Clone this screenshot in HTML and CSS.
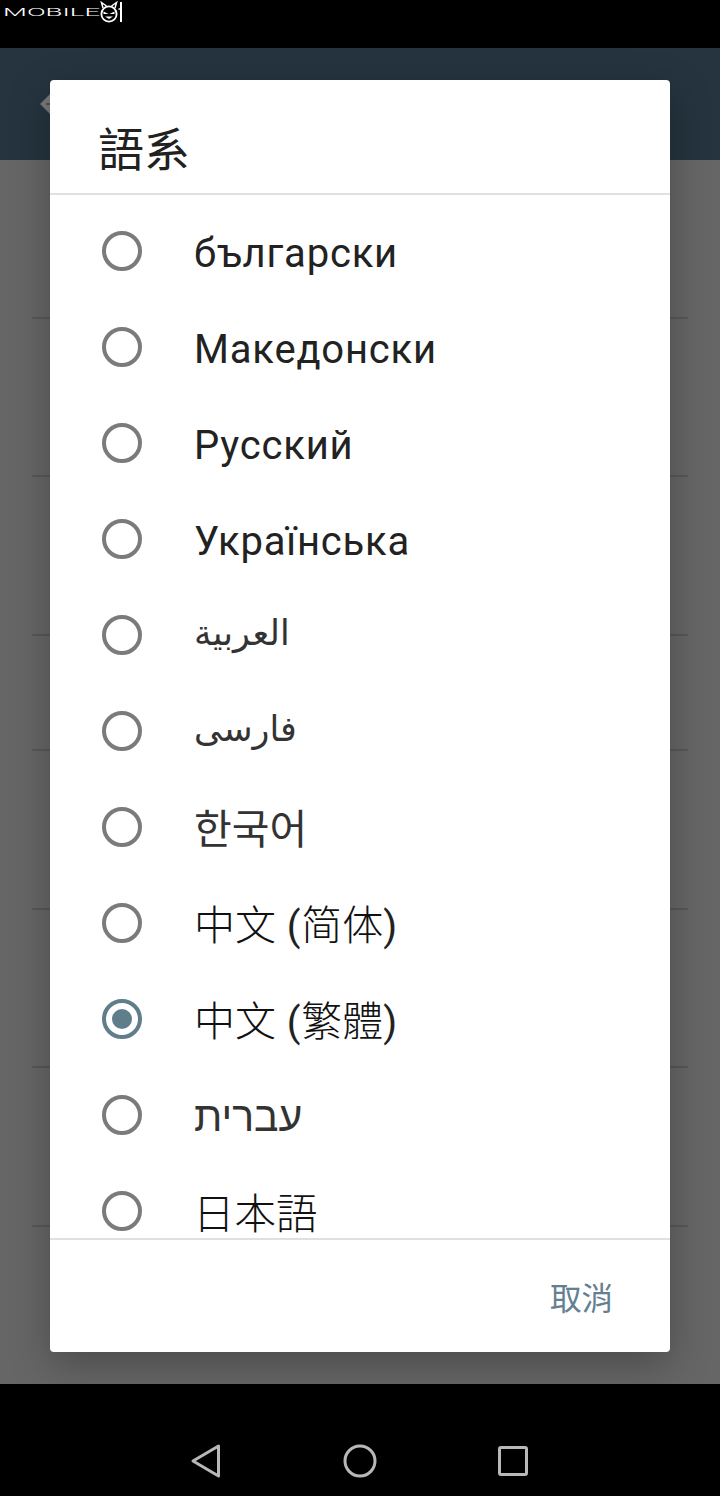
FILE: index.html
```html
<!DOCTYPE html>
<html lang="zh-Hant">
<head>
<meta charset="utf-8">
<title>語系</title>
<link rel="stylesheet" href="styles.css">
</head>
<body>
<div class="screen">
  <div class="status">
    <div class="logo">
      <span class="logo-box"><span class="logo-text">MOBILE</span></span>
      <svg class="logo-icon" viewBox="0 0 30 24" width="30" height="24">
        <circle cx="10" cy="14" r="7.6" fill="none" stroke="#fff" stroke-width="1.8"/>
        <path d="M4 8 L2.5 2.5 L7.5 6 M16 8 L17.5 2.5 L12.5 6" fill="none" stroke="#fff" stroke-width="1.5"/>
        <path d="M4.5 11.5 L9.5 14 L4.5 14 Z M15.5 11.5 L10.5 14 L15.5 14 Z M6 16.5 L10 19 L14 16.5 Z" fill="#fff"/>
        <path d="M22 2 V22" stroke="#fff" stroke-width="2"/>
        <path d="M19.5 9 H21.5" stroke="#fff" stroke-width="1.5"/>
      </svg>
    </div>
  </div>
  <header class="appbar">
    <svg class="back" viewBox="0 0 20 24" width="20" height="24"><path d="M0 12 L10 2 L20 2 V22 L10 22 Z" fill="#77797b"/><path d="M6 12 H20" stroke="#4d5357" stroke-width="2"/></svg>
  </header>
  <main class="behind">
    <div class="row h159"></div>
    <div class="row h158"></div>
    <div class="row h159"></div>
    <div class="row h115"></div>
    <div class="row h159"></div>
    <div class="row h158"></div>
    <div class="row h159"></div>
  </main>
  <nav class="navbar">
    <svg viewBox="0 0 32 36" width="32" height="36"><path d="M28.5 3 V33 L3 18 Z" fill="none" stroke="#b8b8b8" stroke-width="3" stroke-linejoin="round"/></svg>
    <svg viewBox="0 0 36 36" width="36" height="36"><circle cx="18" cy="18" r="15" fill="none" stroke="#b8b8b8" stroke-width="3"/></svg>
    <svg viewBox="0 0 32 32" width="32" height="32"><rect x="1.5" y="2.5" width="27" height="27" rx="1.5" fill="none" stroke="#b8b8b8" stroke-width="3"/></svg>
  </nav>
  <section class="dialog">
    <h1 class="title">語系</h1>
    <ul class="list">
      <li class="item"><span class="radio"></span><span class="label">български</span></li>
      <li class="item"><span class="radio"></span><span class="label">Македонски</span></li>
      <li class="item"><span class="radio"></span><span class="label">Русский</span></li>
      <li class="item"><span class="radio"></span><span class="label">Українська</span></li>
      <li class="item"><span class="radio"></span><span class="label arabic" lang="ar">العربية</span></li>
      <li class="item"><span class="radio"></span><span class="label arabic" lang="fa">فارسی</span></li>
      <li class="item"><span class="radio"></span><span class="label ko" lang="ko">한국어</span></li>
      <li class="item"><span class="radio"></span><span class="label mix" lang="zh-Hans"><span class="sc">中文</span> (<span class="sc">简体</span>)</span></li>
      <li class="item"><span class="radio on"></span><span class="label mix"><span class="tc">中文</span> (<span class="tc">繁體</span>)</span></li>
      <li class="item"><span class="radio"></span><span class="label he" lang="he">עברית</span></li>
      <li class="item"><span class="radio"></span><span class="label jp" lang="ja">日本語</span></li>
    </ul>
    <div class="actions"><span class="cancel">取消</span></div>
  </section>
</div>
</body>
</html>
```
FILE: styles.css
```css
* { box-sizing: border-box; }
html, body { margin: 0; padding: 0; background: #000; }
.screen {
  position: relative;
  width: 720px;
  height: 1496px;
  overflow: hidden;
  display: flex;
  flex-direction: column;
  font-family: Roboto, "Noto Sans CJK TC", sans-serif;
}
.status { height: 48px; background: #000; flex: none; }
.logo { display: flex; align-items: flex-start; height: 24px; padding-left: 3px; }
.logo-box { display: block; width: 92px; height: 24px; flex: none; }
.logo-text {
  display: block;
  width: 40px;
  margin-top: 4px;
  color: #fff;
  font: 300 11.5px/16px Roboto, sans-serif;
  letter-spacing: 0;
  transform: scaleX(2.4);
  transform-origin: left center;
  white-space: nowrap;
}
.logo-icon { margin-left: 4px; flex: none; }
.appbar {
  height: 112px;
  flex: none;
  background: #25343f;
  display: flex;
  align-items: center;
  padding-left: 40px;
}
.behind { height: 1224px; flex: none; background: #666; }
.row { border-bottom: 2px solid #585858; margin: 0 32px; }
.h158 { height: 158px; }
.h159 { height: 159px; }
.h115 { height: 115px; }
.navbar {
  flex: 1;
  background: #000;
  display: flex;
  align-items: center;
  padding: 42px 0 0 190px;
  gap: 120px;
}
.dialog {
  position: absolute;
  left: 50px;
  top: 80px;
  width: 620px;
  height: 1272px;
  background: #fff;
  border-radius: 4px;
  box-shadow: 0 12px 40px rgba(0, 0, 0, 0.28);
  display: flex;
  flex-direction: column;
  overflow: hidden;
}
.title {
  margin: 0;
  height: 115px;
  flex: none;
  padding: 36px 0 0 48px;
  font: 400 46px/60px "Noto Sans CJK TC", sans-serif;
  color: #212121;
  border-bottom: 2px solid #e0e0e0;
}
.list {
  list-style: none;
  margin: 0;
  padding: 8px 0 0;
  height: 1045px;
  flex: none;
  overflow: hidden;
  border-bottom: 2px solid #e0e0e0;
}
.item {
  height: 96px;
  display: flex;
  align-items: center;
  padding-left: 52px;
  gap: 52px;
}
.radio {
  width: 40px;
  height: 40px;
  flex: none;
  border: 4px solid #7b7b7b;
  border-radius: 50%;
  display: flex;
  align-items: center;
  justify-content: center;
}
.radio.on { border-color: #607d8b; }
.radio.on::after {
  content: "";
  width: 20px;
  height: 20px;
  border-radius: 50%;
  background: #607d8b;
}
.label {
  font-size: 40px;
  line-height: 56px;
  letter-spacing: 0.8px;
  color: #222;
  white-space: nowrap;
  padding-top: 6px;
}
.mix { padding-top: 2px; }
.arabic { font-family: "DejaVu Sans", sans-serif; font-size: 35px; letter-spacing: 0; padding-top: 0; padding-bottom: 4px; color: #333; }
.ko { font-family: "Noto Sans CJK KR", sans-serif; font-weight: 400; font-size: 41px; letter-spacing: 0; padding-top: 0; padding-bottom: 2px; color: #333; }
.sc, .tc { font-size: 41px; font-weight: 300; letter-spacing: 0; color: #111; }
.sc { font-family: "Noto Sans CJK SC", sans-serif; }
.tc { font-family: "Noto Sans CJK TC", sans-serif; }
.jp { font-family: "Noto Sans CJK JP", sans-serif; font-weight: 300; font-size: 41.5px; letter-spacing: 0; padding-top: 0; margin-left: -1px; color: #111; }
.he { font-family: Roboto, "Liberation Sans", sans-serif; font-size: 41px; letter-spacing: 0; padding-top: 4px; color: #333; }
.actions {
  flex: 1;
  display: flex;
  align-items: center;
  justify-content: flex-end;
  padding: 0 57px 0 0;
}
.cancel { font: 400 31.5px/44px "Noto Sans CJK TC", sans-serif; color: #648090; }
```
